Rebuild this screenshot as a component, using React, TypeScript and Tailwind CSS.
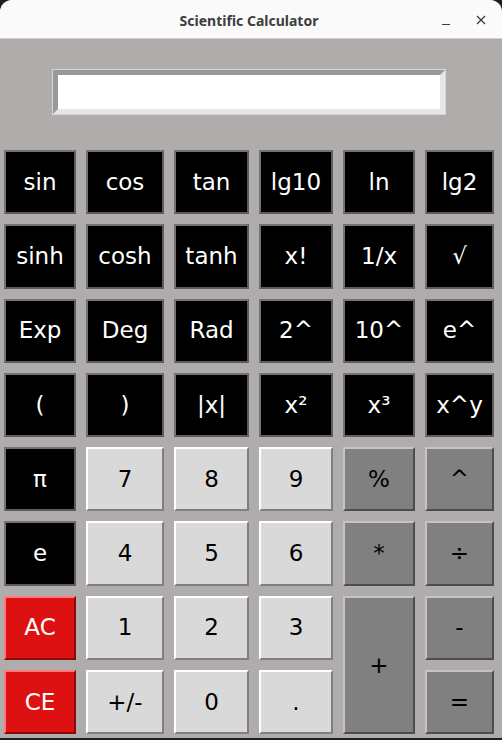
import React from "react";

type Kind = "black" | "light" | "op" | "red";

const kindCls: Record<Kind, string> = {
  black:
    "bg-black text-white border-2 border-t-[#737373] border-l-[#737373] border-b-[#5c5c5c] border-r-[#5c5c5c]",
  light:
    "bg-[#d9d9d9] text-black border-2 border-t-white border-l-white border-b-[#7f7f7f] border-r-[#7f7f7f]",
  op: "bg-[#808080] text-black border-2 border-t-[#c4c4c4] border-l-[#c4c4c4] border-b-[#4d4d4d] border-r-[#4d4d4d]",
  red: "bg-[#dd1111] text-white border-2 border-t-[#ff7b7b] border-l-[#ff7b7b] border-b-[#8a0808] border-r-[#8a0808]",
};

type B = { t: string; k: Kind; span?: boolean };

const buttons: B[] = [
  { t: "sin", k: "black" },
  { t: "cos", k: "black" },
  { t: "tan", k: "black" },
  { t: "lg10", k: "black" },
  { t: "ln", k: "black" },
  { t: "lg2", k: "black" },
  { t: "sinh", k: "black" },
  { t: "cosh", k: "black" },
  { t: "tanh", k: "black" },
  { t: "x!", k: "black" },
  { t: "1/x", k: "black" },
  { t: "√", k: "black" },
  { t: "Exp", k: "black" },
  { t: "Deg", k: "black" },
  { t: "Rad", k: "black" },
  { t: "2^", k: "black" },
  { t: "10^", k: "black" },
  { t: "e^", k: "black" },
  { t: "(", k: "black" },
  { t: ")", k: "black" },
  { t: "|x|", k: "black" },
  { t: "x²", k: "black" },
  { t: "x³", k: "black" },
  { t: "x^y", k: "black" },
  { t: "π", k: "black" },
  { t: "7", k: "light" },
  { t: "8", k: "light" },
  { t: "9", k: "light" },
  { t: "%", k: "op" },
  { t: "^", k: "op" },
  { t: "e", k: "black" },
  { t: "4", k: "light" },
  { t: "5", k: "light" },
  { t: "6", k: "light" },
  { t: "*", k: "op" },
  { t: "÷", k: "op" },
  { t: "AC", k: "red" },
  { t: "1", k: "light" },
  { t: "2", k: "light" },
  { t: "3", k: "light" },
  { t: "+", k: "op", span: true },
  { t: "-", k: "op" },
  { t: "CE", k: "red" },
  { t: "+/-", k: "light" },
  { t: "0", k: "light" },
  { t: ".", k: "light" },
  { t: "=", k: "op" },
];

export default function App() {
  return (
    <div className="w-[502px] h-[740px] bg-[#1e1e1e] overflow-hidden">
      <div className="w-[502px] h-[738px] rounded-t-[12px] overflow-hidden flex flex-col bg-[#b0acab]">
        <div className="h-[39px] shrink-0 bg-[#fafafa] border-b border-[#cfcfcf] relative flex items-center justify-center">
          <span
            className="text-[14px] font-bold text-[#3d3d3d] ml-[-4px] mt-[3px]"
            style={{ fontFamily: "'Noto Sans', 'DejaVu Sans', sans-serif" }}
          >
            Scientific Calculator
          </span>
          <div className="absolute right-[15px] top-0 h-[38px] flex items-center gap-[23px] pt-[4px]">
            <svg width="12" height="12" viewBox="0 0 12 12">
              <line x1="2" y1="9.5" x2="10" y2="9.5" stroke="#3d3d3d" strokeWidth="1.2" />
            </svg>
            <svg width="12" height="12" viewBox="0 0 12 12">
              <line x1="2" y1="1" x2="10" y2="9" stroke="#3d3d3d" strokeWidth="1.2" />
              <line x1="10" y1="1" x2="2" y2="9" stroke="#3d3d3d" strokeWidth="1.2" />
            </svg>
          </div>
        </div>
        <div className="flex-1 flex flex-col">
          <div className="pt-[30px] flex justify-center pr-[4px]">
            <div className="w-[394px] h-[46px] border border-[#d6d6d6] flex">
              <div className="flex-1 bg-white border-[5px] border-t-[#999999] border-l-[#999999] border-b-[#e6e6e6] border-r-[#e6e6e6]" />
            </div>
          </div>
          <div
            className="mt-[35px] ml-[4px] grid grid-cols-[72px_78px_75px_74px_72px_69px] grid-rows-[repeat(8,64.3px)] gap-x-[10px] gap-y-[10px]"
            style={{ fontFamily: "'DejaVu Sans', sans-serif" }}
          >
            {buttons.map((b, i) => (
              <div
                key={i}
                className={`${kindCls[b.k]} ${b.span ? "row-span-2" : ""} flex items-center justify-center text-[23px] leading-none`}
              >
                {b.t}
              </div>
            ))}
          </div>
        </div>
      </div>
    </div>
  );
}
